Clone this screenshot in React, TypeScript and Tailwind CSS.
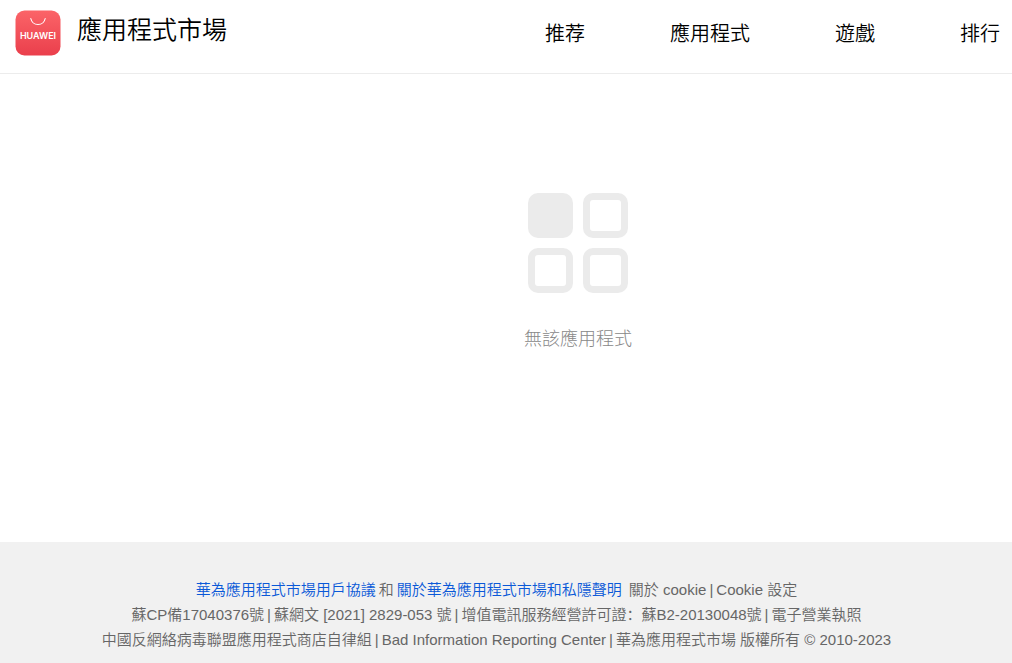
import * as React from 'react'

const NAV_ITEMS = ['推荐', '應用程式', '遊戲', '排行']

const App: React.FC<{}> = () => {
  return (
    <div className="flex min-h-screen flex-col bg-white font-['Liberation_Sans','Noto_Sans_CJK_SC',sans-serif] font-[350]">
      <Header />
      <EmptyState />
      <Footer />
    </div>
  )
}

const Header: React.FC<{}> = () => {
  return (
    <header className="flex items-start justify-between border-b border-[#ececec] pr-3 pb-[17px] pl-[15px] text-black">
      <a href="#" className="flex items-start gap-4 pt-[10px]">
        <StoreLogo />
        <h1 className="text-[25px] leading-10 font-[350]">應用程式市場</h1>
      </a>
      <nav className="flex gap-[85px] pt-[18px] text-xl leading-8">
        {NAV_ITEMS.map(item => <a key={item} href="#">{item}</a>)}
      </nav>
    </header>
  )
}

const StoreLogo: React.FC<{}> = () => {
  return (
    <svg width="46" height="46" viewBox="0 0 46 46" aria-hidden="true">
      <defs>
        <linearGradient id="logo-fill" x1="0" y1="0" x2="0" y2="1">
          <stop offset="0" stopColor="#fb6468" />
          <stop offset="1" stopColor="#ea3f4c" />
        </linearGradient>
      </defs>
      <rect x="0.5" y="0.5" width="45" height="45" rx="9" fill="url(#logo-fill)" />
      <path d="M15.8 8.5c.8 3.7 3.6 6 7.2 6s6.4-2.3 7.2-6" fill="none" stroke="#fff" strokeWidth="1.1" strokeLinecap="round" />
      <text x="23" y="29" textAnchor="middle" fill="#fff" fontFamily="Inter, sans-serif" fontSize="9" fontWeight="600">HUAWEI</text>
    </svg>
  )
}

const EmptyState: React.FC<{}> = () => {
  return (
    <main className="flex flex-1 flex-col items-center pt-[119px] pl-36">
      <div className="grid grid-cols-2 gap-[10px]">
        <div className="size-[45px] rounded-[10px] bg-[#ebebeb]"></div>
        <EmptyTile />
        <EmptyTile />
        <EmptyTile />
      </div>
      <p className="pt-8 text-lg leading-7 font-light text-[#888888]">無該應用程式</p>
    </main>
  )
}

const EmptyTile: React.FC<{}> = () => {
  return <div className="size-[45px] rounded-[10px] border-[7px] border-[#ebebeb]"></div>
}

const Divider: React.FC<{}> = () => {
  return <span className="mx-[3px]">|</span>
}

const Footer: React.FC<{}> = () => {
  return (
    <footer className="bg-[#f1f1f1] pt-[35px] pr-[19px] pb-[11px] text-center text-[15px] leading-[25px] text-[#666666]">
      <p>
        <a href="#" className="text-[#0a59d8]">華為應用程式市場用戶協議</a>
        <span className="mx-[3px]">和</span>
        <a href="#" className="text-[#0a59d8]">關於華為應用程式市場和私隱聲明</a>
        <a href="#" className="ml-[7px]">關於 cookie</a>
        <Divider />
        <a href="#">Cookie 設定</a>
      </p>
      <p>
        蘇CP備17040376號
        <Divider />
        蘇網文 [2021] 2829-053 號
        <Divider />
        增值電訊服務經營許可證：蘇B2-20130048號
        <Divider />
        <a href="#">電子營業執照</a>
      </p>
      <p>
        中國反網絡病毒聯盟應用程式商店自律組
        <Divider />
        <a href="#">Bad Information Reporting Center</a>
        <Divider />
        華為應用程式市場 版權所有 © 2010-2023
      </p>
    </footer>
  )
}

export default App
